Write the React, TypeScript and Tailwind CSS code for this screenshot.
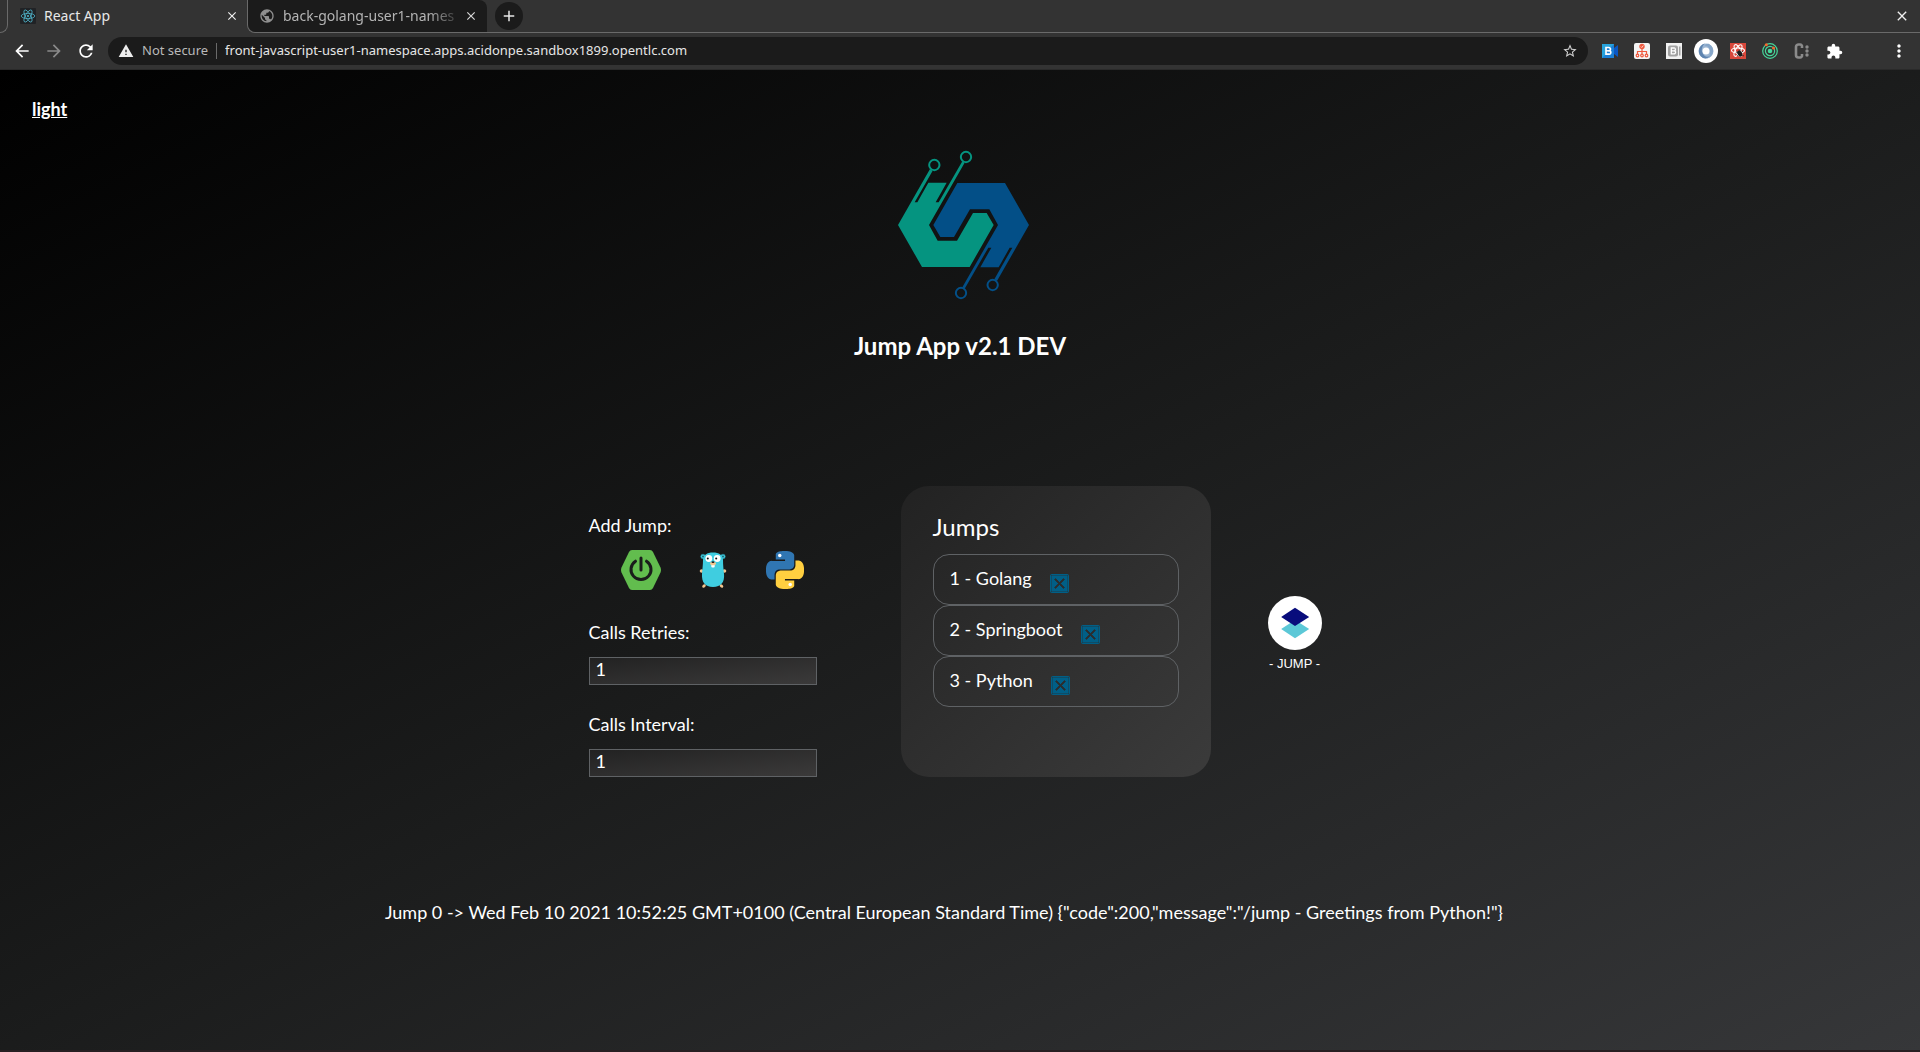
import { useState } from "react";
import type { ReactNode } from "react";
import { MdArrowBack, MdArrowForward, MdRefresh, MdWarning, MdStarBorder, MdExtension, MdMoreVert, MdClose, MdAdd, MdPublic } from "react-icons/md";

function ReactMark() {
  return (
    <svg viewBox="0 0 16 16" className="size-4 shrink-0" fill="none" stroke="#4fb3c9" strokeWidth="0.8">
      <rect width="16" height="16" rx="1" fill="#202225" stroke="none" />
      <ellipse cx="8" cy="8" rx="6.8" ry="2.6" />
      <ellipse cx="8" cy="8" rx="6.8" ry="2.6" transform="rotate(60 8 8)" />
      <ellipse cx="8" cy="8" rx="6.8" ry="2.6" transform="rotate(120 8 8)" />
      <circle cx="8" cy="8" r="1.1" fill="#4fb3c9" stroke="none" />
    </svg>
  );
}

function TabBar() {
  return (
    <div className="flex h-[33px] bg-[#333333] text-sm">
      <div className="w-2 shrink-0 rounded-br-lg border-r border-b border-[#6a6a6a]" />
      <div className="flex w-[239px] shrink-0 items-center pr-2 pb-0.5 pl-3 text-[#e8e8e8]">
        <ReactMark />
        <span className="ml-2 flex-1">React App</span>
        <button type="button" aria-label="Close React App tab" className="text-[#f0f0f0]">
          <MdClose className="size-[14px]" stroke="currentColor" />
        </button>
      </div>
      <div className="flex flex-1 rounded-bl-lg border-b border-l border-[#6a6a6a]">
        <div className="flex w-[239px] shrink-0 items-center rounded-tr-lg rounded-bl-lg bg-[#1b1b1b] pr-[9px] pb-px pl-[11px] text-[#b4b4b4]">
          <MdPublic className="size-4 shrink-0 text-[#8f8f8f]" />
          <span className="ml-2 flex-1 whitespace-nowrap [mask-image:linear-gradient(to_right,black_80%,transparent)]">
            back-golang-user1-names
          </span>
          <button type="button" aria-label="Close back-golang tab" className="text-[#d8d8d8]">
            <MdClose className="size-[14px]" stroke="currentColor" />
          </button>
        </div>
        <button type="button" aria-label="New tab" className="mt-[2px] ml-2 flex size-7 items-center justify-center rounded-full bg-[#1b1b1b] text-[#e8e8e8]">
          <MdAdd className="size-[18px]" stroke="currentColor" />
        </button>
        <button type="button" aria-label="Close window" className="mr-[10px] ml-auto text-[#f0f0f0]">
          <MdClose className="size-4" stroke="currentColor" />
        </button>
      </div>
    </div>
  );
}

function Extension({ label, children }: { label: string; children: ReactNode }) {
  return (
    <button type="button" aria-label={label} className="flex size-6 items-center justify-center">
      {children}
    </button>
  );
}

function Extensions() {
  return (
    <div className="ml-[10px] flex items-center gap-2">
      <Extension label="Blue video">
        <svg viewBox="0 0 16 16" className="size-4">
          <rect y="1" width="12" height="14" fill="#1b7fd6" />
          <path d="M0 1h12L9 4H3v8l-3 3z" fill="#27a3dc" />
          <path d="M12 5l4-3v12l-4-3z" fill="#0b57c4" />
          <path d="M4 4.500h2.800a1.700 1.700 0 0 1 .8 3.200 1.800 1.800 0 0 1-.8 3.500H4z" fill="none" stroke="#fff" strokeWidth="1.700" />
          <path d="M4 7.800h3.500" stroke="#fff" strokeWidth="1.500" />
        </svg>
      </Extension>
      <Extension label="Site map">
        <svg viewBox="0 0 16 16" className="size-4">
          <rect width="16" height="16" rx="2" fill="#f4f4f4" />
          <g fill="none" stroke="#f0593e" strokeWidth="1.200">
            <path d="M8 6v5M3.500 11V8.500h9V11" />
            <circle cx="3.500" cy="12.500" r="1.300" />
            <circle cx="8" cy="12.500" r="1.300" />
            <circle cx="12.500" cy="12.500" r="1.300" />
          </g>
          <circle cx="8" cy="3.500" r="2.700" fill="#f0593e" />
          <path d="M6.800 3.500l1 1 1.500-2" fill="none" stroke="#fff" strokeWidth="0.700" />
        </svg>
      </Extension>
      <Extension label="Grey video">
        <svg viewBox="0 0 16 16" className="size-4">
          <rect width="16" height="16" fill="#f1f1f1" />
          <rect x="2" y="2.500" width="10" height="11" rx="2" fill="#a2a2a2" />
          <path d="M13 3.500h1.500v9H13z" fill="#a2a2a2" />
          <path d="M5.300 5h2.400a1.400 1.400 0 0 1 .6 2.800 1.500 1.500 0 0 1-.6 3.100H5.300zM5.300 7.900h3" fill="none" stroke="#fff" strokeWidth="1.300" />
        </svg>
      </Extension>
      <Extension label="JSON viewer">
        <svg viewBox="0 0 24 24" className="size-6">
          <circle cx="12" cy="12" r="12" fill="#fff" />
          <circle cx="12" cy="12" r="5.500" fill="none" stroke="#9cb6d2" strokeWidth="4" />
          <path d="M9 19C3 16 3.500 6.500 11 4.500c-3 2.500-4 6-2.500 9.500s4.500 4.500 7 3c-1.500 2.500-4 3-6.500 2z" fill="#5e84b0" />
          <path d="M15 5c6 3 5.500 12.500-2 14.500 3-2.500 4-6 2.500-9.500s-3.500-3.500-5-3c1-1.800 3-2.500 4.500-2z" fill="#86a6c9" />
        </svg>
      </Extension>
      <Extension label="React debugger">
        <svg viewBox="0 0 16 16" className="size-4">
          <rect width="16" height="16" fill="#d9483b" />
          <g fill="none" stroke="#fff" strokeWidth="1.100">
            <ellipse cx="8" cy="7.500" rx="6.500" ry="2.500" />
            <ellipse cx="8" cy="7.500" rx="6.500" ry="2.500" transform="rotate(60 8 7.500)" />
            <ellipse cx="8" cy="7.500" rx="6.500" ry="2.500" transform="rotate(120 8 7.500)" />
          </g>
          <ellipse cx="9.800" cy="10.500" rx="2.200" ry="3.200" fill="#1c1c1c" transform="rotate(-30 9.800 10.500)" />
          <path d="M6 9l8 4M7 13l6-5M10 6v8" stroke="#1c1c1c" strokeWidth="0.700" />
        </svg>
      </Extension>
      <Extension label="Orbit">
        <svg viewBox="0 0 16 16" className="size-4" fill="none" stroke="#45d89b">
          <circle cx="8" cy="8" r="7.300" strokeWidth="1.200" />
          <circle cx="8" cy="8" r="4.600" strokeWidth="1.200" />
          <circle cx="8" cy="8" r="2.300" fill="#45d89b" stroke="none" />
          <circle cx="4.300" cy="1.700" r="1.500" fill="#f36a2d" stroke="none" />
          <circle cx="11.500" cy="5" r="1.500" fill="#f36a2d" stroke="none" />
        </svg>
      </Extension>
      <Extension label="Clock">
        <svg viewBox="0 0 16 16" className="size-4" fill="none" stroke="#8b8b8b">
          <path d="M8 5V4A2 2 0 0 0 6 1.500H4.500a2.500 2.500 0 0 0-2.500 2.500v8a2.500 2.500 0 0 0 2.500 2.500H6A2 2 0 0 0 8 12v-1" strokeWidth="2.600" />
          <g fill="#8b8b8b" stroke="none">
            <circle cx="13" cy="4" r="1.700" />
            <circle cx="13" cy="8" r="1.700" />
            <circle cx="13" cy="12" r="1.700" />
          </g>
        </svg>
      </Extension>
      <Extension label="Extensions">
        <MdExtension className="size-[17px] text-white" />
      </Extension>
    </div>
  );
}

function Toolbar() {
  return (
    <div className="flex h-[37px] items-center border-b border-[#2a2a2a] bg-[#333333] pr-[11px] pl-3 text-white">
      <button type="button" aria-label="Back">
        <MdArrowBack className="size-5" />
      </button>
      <button type="button" aria-label="Forward" className="ml-3 text-[#8a8a8a]">
        <MdArrowForward className="size-5" />
      </button>
      <button type="button" aria-label="Reload" className="ml-3">
        <MdRefresh className="size-5" />
      </button>
      <div className="ml-3 flex h-7 flex-1 items-center rounded-full bg-[#1b1b1b] pr-[10px] pl-[10px] text-[13px]">
        <MdWarning className="size-4 text-[#ededed]" />
        <span className="ml-2 text-[#b9b9b9]">Not secure</span>
        <span className="mx-2 h-4 w-px bg-[#6a6a6a]" />
        <input
          aria-label="Address"
          className="min-w-0 flex-1 bg-transparent text-[#e6e6e6] outline-none"
          defaultValue="front-javascript-user1-namespace.apps.acidonpe.sandbox1899.opentlc.com"
        />
        <button type="button" aria-label="Bookmark" className="text-[#d0d0d0]">
          <MdStarBorder className="size-4" />
        </button>
      </div>
      <Extensions />
      <button type="button" aria-label="Menu" className="ml-[43px]">
        <MdMoreVert className="size-5" />
      </button>
    </div>
  );
}

const circuitHalf =
  "M325 158H380L347 217H356L427 94L434 98L327 285L353 332H411L459 249H500L521 285L449 411H306L234 285L330 117L338 122L284 217H292Z";

function CircuitHalf({ color, transform }: { color: string; transform?: string }) {
  return (
    <g transform={transform}>
      <path d={circuitHalf} fill={color} />
      <circle cx="343" cy="105" r="15.500" fill="none" stroke={color} strokeWidth="6" />
      <circle cx="438" cy="81" r="15.500" fill="none" stroke={color} strokeWidth="6" />
    </g>
  );
}

function Logo() {
  return (
    <svg viewBox="210 45 420 480" className="h-40 w-[140px]" role="img" aria-label="Jump App logo">
      <CircuitHalf color="#059480" />
      <CircuitHalf color="#034f87" transform="rotate(180 430.500 285)" />
    </svg>
  );
}

function Springboot() {
  return (
    <svg viewBox="0 0 40 40" className="size-10">
      <path d="M11 0h18q2 0 3 2l7.500 15.500q1 2.500 0 5L32 38q-1 2-3 2H11q-2 0-3-2L.5 22.500q-1-2.500 0-5L8 2q1-2 3-2z" fill="#62bd4e" />
      <path d="M14.500 11.200a10 10 0 1 0 11 0M20 8v12" fill="none" stroke="#1a1c1b" strokeWidth="3" strokeLinecap="round" />
    </svg>
  );
}

function Gopher() {
  return (
    <svg viewBox="0 0 40 40" className="size-10">
      <g fill="#f2c58f">
        <ellipse cx="8.700" cy="21" rx="2" ry="1.700" />
        <ellipse cx="31.300" cy="21" rx="2" ry="1.700" />
        <ellipse cx="11" cy="36" rx="2" ry="1.500" transform="rotate(-45 11 36)" />
        <ellipse cx="28.500" cy="36" rx="2" ry="1.500" transform="rotate(45 28.500 36)" />
      </g>
      <g fill="#3fcde0" stroke="#2b8d9c" strokeWidth="0.500">
        <circle cx="10" cy="6.500" r="2.300" />
        <circle cx="30" cy="6.500" r="2.300" />
        <path d="M10 10c0-5 4-7.500 10-7.500S30 5 30 10c0 5 .5 9 1 14 .8 8-3 13-11 13S8.500 32 9 24c.4-5 1-9 1-14z" stroke="none" />
      </g>
      <circle cx="10" cy="6.500" r="0.900" fill="#1e5c68" />
      <circle cx="30" cy="6.500" r="0.900" fill="#1e5c68" />
      <circle cx="15.800" cy="8.500" r="3.400" fill="#fff" />
      <circle cx="24.200" cy="8.500" r="3.400" fill="#fff" />
      <circle cx="14.800" cy="8.500" r="1" fill="#111" />
      <circle cx="23.200" cy="8.500" r="1" fill="#111" />
      <rect x="18.300" y="14" width="3.400" height="3.600" rx="1" fill="#fff" />
      <ellipse cx="20" cy="13.500" rx="3" ry="1.800" fill="#f2c58f" />
      <ellipse cx="20" cy="12.200" rx="1.400" ry="0.900" fill="#222" />
    </svg>
  );
}

const snake =
  "M14.250.180l.9.2.73.26.59.3.45.32.34.34.25.34.16.33.1.3.04.26.02.2-.01.130V8.500l-.05.630-.13.550-.21.460-.26.380-.3.310-.33.250-.35.190-.35.140-.33.100-.3.070-.26.040-.21.020H8.770l-.69.050-.59.140-.5.220-.41.270-.33.320-.27.350-.2.360-.15.370-.1.350-.07.320-.04.270-.02.210v3.060H3.170l-.21-.03-.28-.07-.32-.12-.35-.18-.36-.26-.36-.36-.35-.46-.32-.59-.28-.73-.21-.88-.14-1.050-.05-1.230.06-1.220.16-1.040.24-.87.32-.71.36-.57.4-.44.42-.33.42-.24.4-.16.36-.1.320-.05.240-.01h.160l.060.010h8.160v-.83H6.180l-.01-2.750-.02-.37.050-.34.110-.31.170-.28.250-.26.310-.23.380-.2.440-.18.510-.15.580-.12.640-.1.710-.06.770-.04.840-.02 1.270.05z";

function Python() {
  return (
    <svg viewBox="0 0 24 24" className="size-[38px]">
      <path d={snake} fill="#3076b2" />
      <path d={snake} fill="#ffcf40" transform="rotate(180 12 12)" />
      <circle cx="8.700" cy="2.900" r="1.100" fill="#fff" />
      <circle cx="15.300" cy="21.100" r="1.100" fill="#fff" />
    </svg>
  );
}

function NumberField({ id, label }: { id: string; label: string }) {
  return (
    <div className="flex flex-col gap-[13px]">
      <label htmlFor={id} className="leading-6">{label}</label>
      <input
        id={id}
        defaultValue="1"
        className="h-7 w-full border border-[#5f6265] bg-linear-to-br/srgb from-[#222222] to-[#3b3a3a] px-[6px] pb-1 outline-none"
      />
    </div>
  );
}

export default function App() {
  const [jumps, setJumps] = useState(["Golang", "Springboot", "Python"]);
  const add = (name: string) => setJumps([...jumps, name]);
  const technologies = [
    { name: "Springboot", icon: <Springboot /> },
    { name: "Golang", icon: <Gopher /> },
    { name: "Python", icon: <Python /> },
  ];

  return (
    <div className="flex min-h-screen flex-col font-['Noto_Sans',sans-serif]">
      <TabBar />
      <Toolbar />
      <main className="flex flex-1 flex-col items-center border-b-2 border-[#271f22] bg-linear-to-br/srgb from-black via-[#1b1c1c] to-[#363739] font-['Lato',sans-serif] text-lg text-white">
        <div className="w-full px-8 pt-[25px]">
          <a href="#light" className="leading-7 font-bold underline">light</a>
        </div>
        <div className="mt-[22px]">
          <Logo />
        </div>
        <h1 className="mt-[25px] text-2xl font-bold">Jump App v2.1 DEV</h1>

        <section className="mt-[124px] flex pr-[10px]">
          <div className="flex w-[228px] flex-col pt-[27px]">
            <p className="leading-6">Add Jump:</p>
            <div className="mt-[13px] flex gap-8 pl-8">
              {technologies.map((t) => (
                <button key={t.name} type="button" aria-label={`Add ${t.name}`} className="flex size-10 items-center justify-center" onClick={() => add(t.name)}>
                  {t.icon}
                </button>
              ))}
            </div>
            <div className="mt-[30px] flex flex-col gap-[27px]">
              <NumberField id="retries" label="Calls Retries:" />
              <NumberField id="interval" label="Calls Interval:" />
            </div>
          </div>

          <div className="ml-[84px] min-h-[291px] w-[310px] rounded-[28px] bg-linear-to-br/srgb from-[#222222] to-[#3b3b3b] px-8 pt-[27px]">
            <h2 className="text-2xl leading-7">Jumps</h2>
            <ul className="mt-[13px]">
              {jumps.map((name, i) => (
                <li key={i} className="flex h-[51px] items-center gap-[18px] rounded-2xl border border-[#5f6265] px-4">
                  <span className="pb-[3px]">{i + 1} - {name}</span>
                  <button
                    type="button"
                    aria-label={`Remove ${name}`}
                    className="mt-2 flex size-[19px] items-center justify-center rounded-xs bg-[#005f87] text-[#2c2c2c]"
                    onClick={() => setJumps(jumps.filter((_, j) => j !== i))}
                  >
                    <MdClose className="size-[17px]" strokeWidth="1" stroke="currentColor" />
                  </button>
                </li>
              ))}
            </ul>
          </div>

          <button type="button" className="ml-[57px] flex flex-col items-center gap-1 self-center pt-2 font-['Liberation_Sans',sans-serif] text-[13px]">
            <svg viewBox="85 79 160 160" className="size-[54px]">
              <circle cx="165" cy="159" r="80" fill="#fff" />
              <path d="M124 177l41-27 42 27-42 27z" fill="#5cc8d7" />
              <path d="M124 141l41-27 42 27-42 27z" fill="#080c7c" />
            </svg>
            - JUMP -
          </button>
        </section>

        <p className="mt-[123px] pr-8 leading-6">
          {'Jump 0 -> Wed Feb 10 2021 10:52:25 GMT+0100 (Central European Standard Time) {"code":200,"message":"/jump - Greetings from Python!"}'}
        </p>
      </main>
    </div>
  );
}
